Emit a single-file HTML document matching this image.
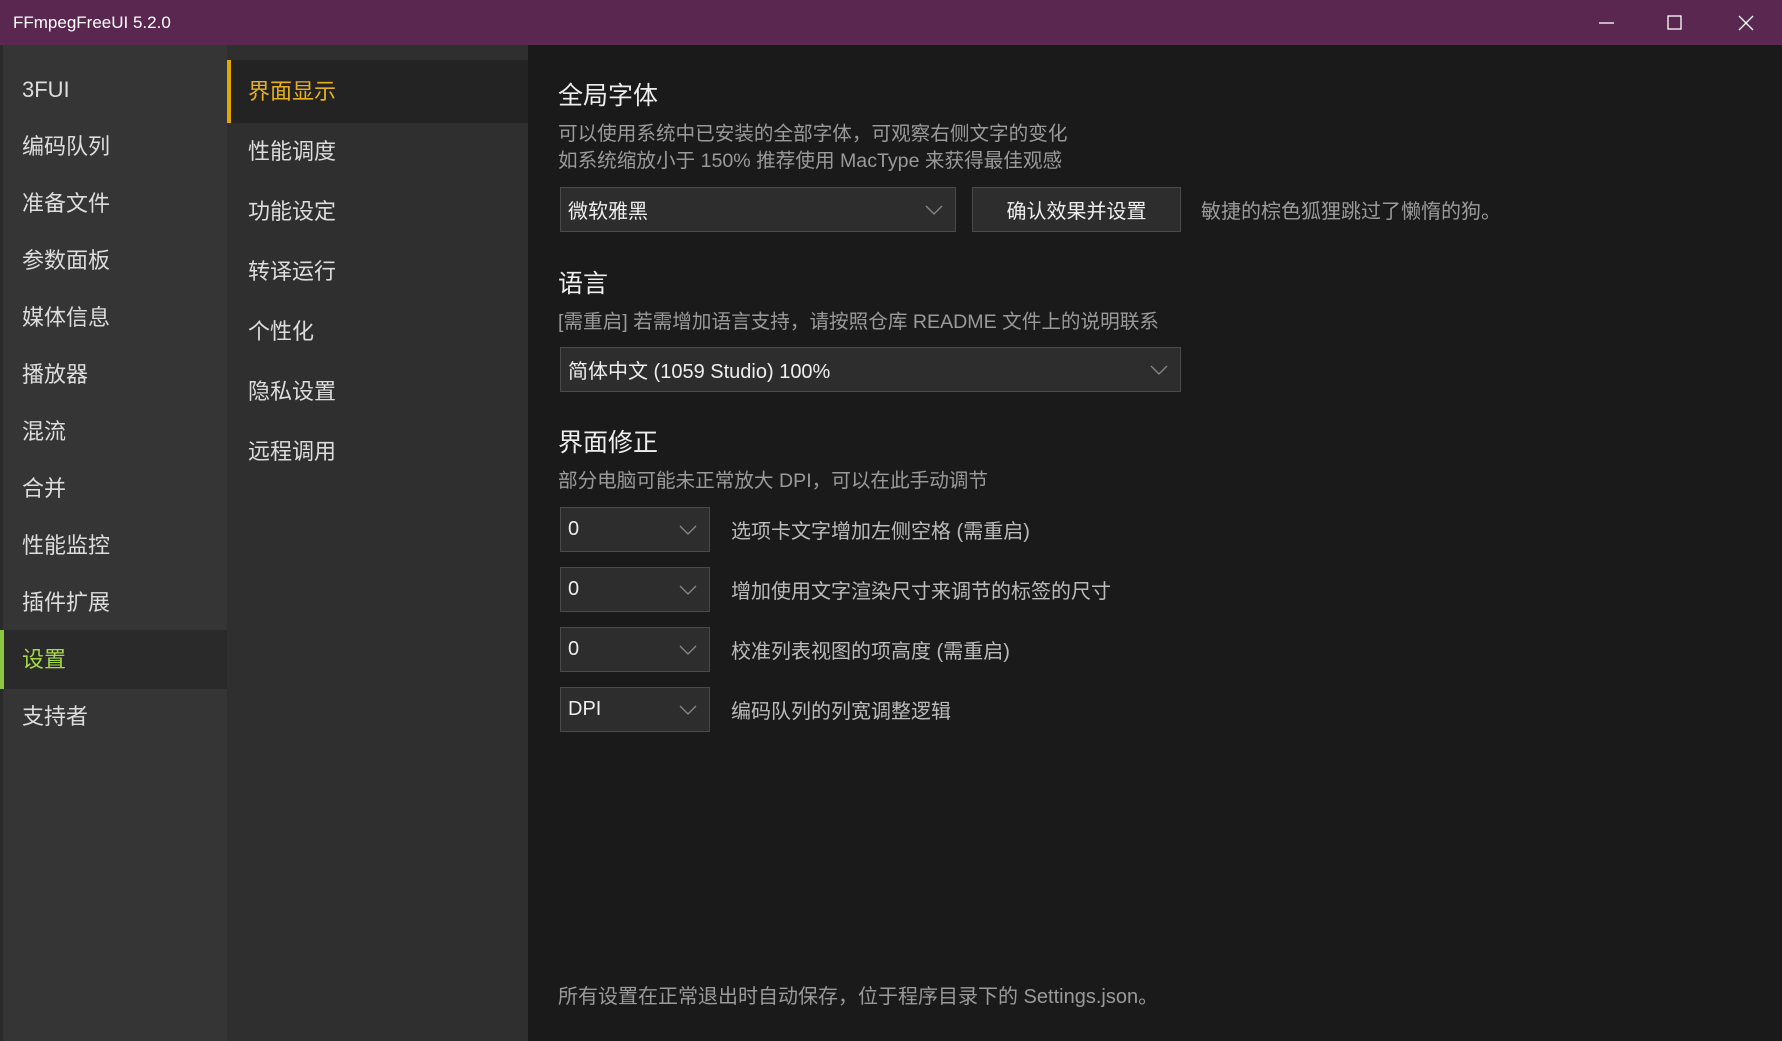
<!DOCTYPE html>
<html><head><meta charset="utf-8"><style>
*{margin:0;padding:0;box-sizing:border-box}
body{width:1782px;height:1041px;overflow:hidden;background:#1a1a1a;font-family:"Liberation Sans","Noto Sans CJK SC",sans-serif;position:relative}
.title{position:absolute;left:0;top:0;width:1782px;height:45px;background:#5a2750;color:#fff;font-size:17px;line-height:45px;padding-left:13px}
.left{position:absolute;left:0;top:45px;width:227px;height:996px;background:#353535;border-left:3px solid #2a2a2a}
.sub{position:absolute;left:227px;top:45px;width:301px;height:996px;background:#2f2f2f}
.it{position:absolute;font-size:22px;color:#ddd;line-height:30px}
h2{position:absolute;font-size:25px;font-weight:normal;color:#eee;left:558px}
.d{position:absolute;left:558px;font-size:19.6px;color:#9a9a9a}
.box{position:absolute;background:#2d2d2d;border:1px solid #4a4a4a;color:#eee;font-size:20px;padding-left:7px;display:flex;align-items:center}
.box svg{position:absolute;right:12px;top:50%;margin-top:-5px}
.lab{position:absolute;left:731px;font-size:20px;color:#bbb}
</style></head><body>
<div class="title">FFmpegFreeUI 5.2.0
<svg style="position:absolute;left:1598px;top:14px" width="18" height="18"><line x1="1" y1="9" x2="16" y2="9" stroke="#fff" stroke-width="1.3"/></svg>
<svg style="position:absolute;left:1666px;top:14px" width="18" height="18"><rect x="2" y="2" width="13" height="13" fill="none" stroke="#fff" stroke-width="1.3"/></svg>
<svg style="position:absolute;left:1737px;top:14px" width="18" height="18"><path d="M2 2L16 16M16 2L2 16" stroke="#fff" stroke-width="1.3"/></svg>
</div>
<div class="left"></div>
<div style="position:absolute;left:0;top:630px;width:227px;height:59px;background:#2a2a2a;border-left:4px solid #8dc63f"></div>
<div class="it" style="left:22px;top:75px">3FUI</div>
<div class="it" style="left:22px;top:132px">编码队列</div>
<div class="it" style="left:22px;top:189px">准备文件</div>
<div class="it" style="left:22px;top:246px">参数面板</div>
<div class="it" style="left:22px;top:303px">媒体信息</div>
<div class="it" style="left:22px;top:360px">播放器</div>
<div class="it" style="left:22px;top:417px">混流</div>
<div class="it" style="left:22px;top:474px">合并</div>
<div class="it" style="left:22px;top:531px">性能监控</div>
<div class="it" style="left:22px;top:588px">插件扩展</div>
<div class="it" style="left:22px;top:645px;color:#a6d84a">设置</div>
<div class="it" style="left:22px;top:702px">支持者</div>
<div class="sub"></div>
<div style="position:absolute;left:227px;top:60px;width:301px;height:63px;background:#232323;border-left:4px solid #e0a800"></div>
<div class="it" style="left:248px;top:77px;color:#e8b020">界面显示</div>
<div class="it" style="left:248px;top:137px">性能调度</div>
<div class="it" style="left:248px;top:197px">功能设定</div>
<div class="it" style="left:248px;top:257px">转译运行</div>
<div class="it" style="left:248px;top:317px">个性化</div>
<div class="it" style="left:248px;top:377px">隐私设置</div>
<div class="it" style="left:248px;top:437px">远程调用</div>

<h2 style="top:76px">全局字体</h2>
<div class="d" style="top:117px">可以使用系统中已安装的全部字体，可观察右侧文字的变化</div>
<div class="d" style="top:144px">如系统缩放小于 150% 推荐使用 MacType 来获得最佳观感</div>
<div class="box" style="left:560px;top:187px;width:396px;height:45px">微软雅黑<svg width="18" height="10"><path d="M1 1L9 9L17 1" fill="none" stroke="#888" stroke-width="1.3"/></svg></div>
<div class="box" style="left:972px;top:187px;width:209px;height:45px;justify-content:center;padding:0">确认效果并设置</div>
<div class="d" style="left:1201px;top:195px;font-size:20px">敏捷的棕色狐狸跳过了懒惰的狗。</div>

<h2 style="top:264px">语言</h2>
<div class="d" style="top:305px">[需重启] 若需增加语言支持，请按照仓库 README 文件上的说明联系</div>
<div class="box" style="left:560px;top:347px;width:621px;height:45px">简体中文 (1059 Studio) 100%<svg width="18" height="10"><path d="M1 1L9 9L17 1" fill="none" stroke="#888" stroke-width="1.3"/></svg></div>

<h2 style="top:423px">界面修正</h2>
<div class="d" style="top:464px">部分电脑可能未正常放大 DPI，可以在此手动调节</div>
<div class="box" style="left:560px;top:507px;width:150px;height:45px">0<svg width="18" height="10"><path d="M1 1L9 9L17 1" fill="none" stroke="#888" stroke-width="1.3"/></svg></div>
<div class="lab" style="top:515px">选项卡文字增加左侧空格 (需重启)</div>
<div class="box" style="left:560px;top:567px;width:150px;height:45px">0<svg width="18" height="10"><path d="M1 1L9 9L17 1" fill="none" stroke="#888" stroke-width="1.3"/></svg></div>
<div class="lab" style="top:575px">增加使用文字渲染尺寸来调节的标签的尺寸</div>
<div class="box" style="left:560px;top:627px;width:150px;height:45px">0<svg width="18" height="10"><path d="M1 1L9 9L17 1" fill="none" stroke="#888" stroke-width="1.3"/></svg></div>
<div class="lab" style="top:635px">校准列表视图的项高度 (需重启)</div>
<div class="box" style="left:560px;top:687px;width:150px;height:45px">DPI<svg width="18" height="10"><path d="M1 1L9 9L17 1" fill="none" stroke="#888" stroke-width="1.3"/></svg></div>
<div class="lab" style="top:695px">编码队列的列宽调整逻辑</div>

<div class="d" style="top:980px;font-size:20px">所有设置在正常退出时自动保存，位于程序目录下的 Settings.json。</div>
</body></html>
